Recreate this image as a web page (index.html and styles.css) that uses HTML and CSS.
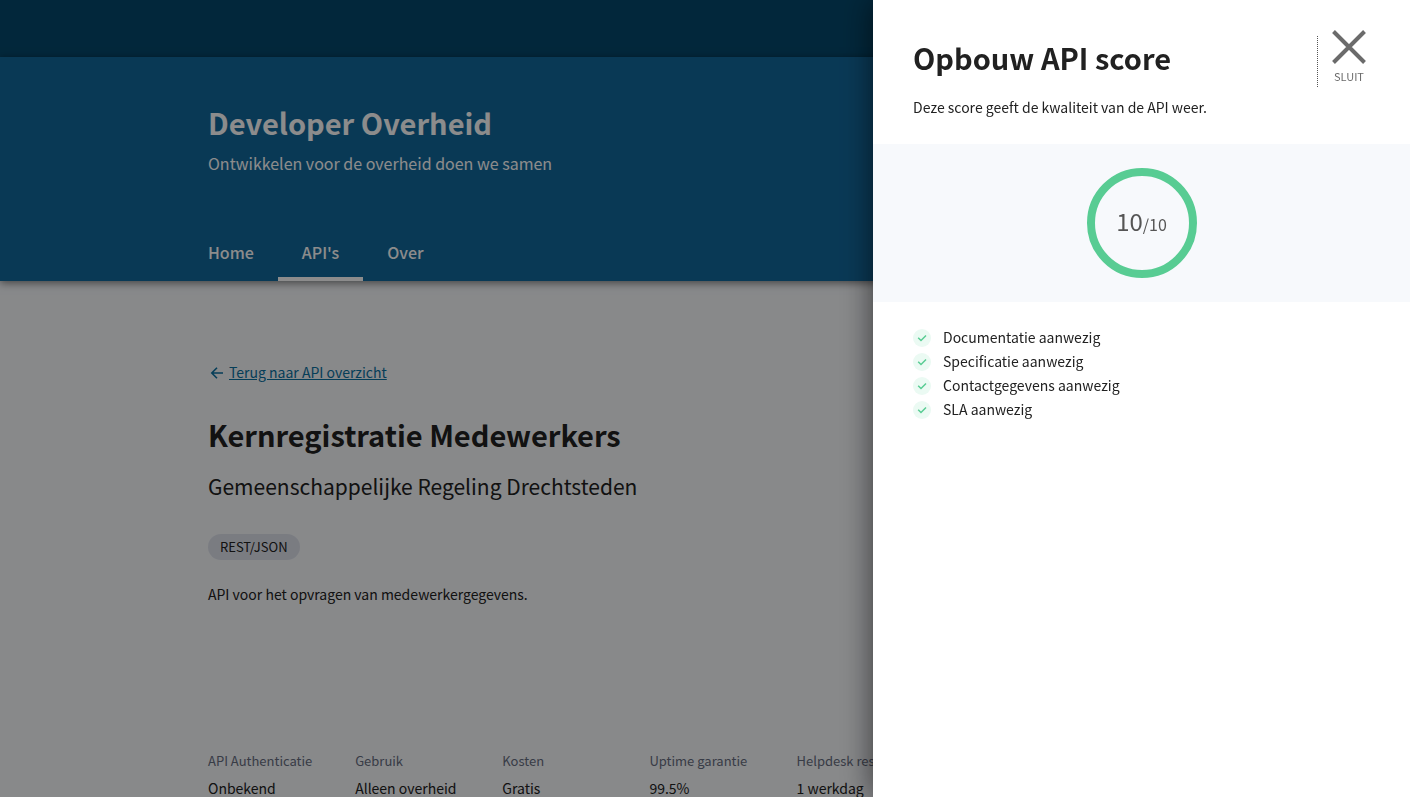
FILE: index.html
```html
<!DOCTYPE html>
<html lang="nl">
<head>
<meta charset="utf-8">
<meta name="viewport" content="width=device-width, initial-scale=1">
<title>Developer Overheid</title>
<link rel="stylesheet" href="styles.css">
</head>
<body>
<div class="page">
  <div class="topbar"></div>
  <header class="header">
    <div class="container">
      <p class="site-title">Developer Overheid</p>
      <p class="site-tagline">Ontwikkelen voor de overheid doen we samen</p>
      <nav class="nav">
        <a class="nav-link" href="#home">Home</a>
        <a class="nav-link nav-link-active" href="#apis">API's</a>
        <a class="nav-link" href="#over">Over</a>
      </nav>
    </div>
  </header>
  <main class="container main">
    <a class="back" href="#apis">
      <svg class="back-icon" viewBox="0 0 18 18" aria-hidden="true"><path d="M15 10H4M9 4.8L3.8 10L9 15.2" fill="none" stroke="currentColor" stroke-width="1.6"/></svg>
      <span class="back-text">Terug naar API overzicht</span>
    </a>
    <h1 class="title">Kernregistratie Medewerkers</h1>
    <p class="organization">Gemeenschappelijke Regeling Drechtsteden</p>
    <span class="tag">REST/JSON</span>
    <p class="description">API voor het opvragen van medewerkergegevens.</p>
    <dl class="facts">
      <div><dt>API Authenticatie</dt><dd>Onbekend</dd></div>
      <div><dt>Gebruik</dt><dd>Alleen overheid</dd></div>
      <div><dt>Kosten</dt><dd>Gratis</dd></div>
      <div><dt>Uptime garantie</dt><dd>99.5%</dd></div>
      <div><dt>Helpdesk respons</dt><dd>1 werkdag</dd></div>
    </dl>
  </main>
</div>
<div class="overlay"></div>
<aside class="drawer" role="dialog" aria-labelledby="drawer-title">
  <div class="drawer-header">
    <div>
      <h2 class="drawer-title" id="drawer-title">Opbouw API score</h2>
      <p class="drawer-intro">Deze score geeft de kwaliteit van de API weer.</p>
    </div>
    <button class="close" type="button">
      <svg class="close-icon" viewBox="0 0 34 34" aria-hidden="true"><path d="M1.5 1.5L32.5 32.5M32.5 1.5L1.5 32.5" stroke="currentColor" stroke-width="4"/></svg>
      <span>SLUIT</span>
    </button>
  </div>
  <div class="score-band">
    <div class="score"><span class="score-value">10</span><span class="score-max">/10</span></div>
  </div>
  <ul class="checks">
    <li><svg class="check" viewBox="0 0 18 18" aria-hidden="true"><circle cx="9" cy="9" r="9" fill="#ebfaf3"/><path d="M5.2 8.8L8 11.5L13 6.5" fill="none" stroke="#58cc93" stroke-width="1.5"/></svg>Documentatie aanwezig</li>
    <li><svg class="check" viewBox="0 0 18 18" aria-hidden="true"><circle cx="9" cy="9" r="9" fill="#ebfaf3"/><path d="M5.2 8.8L8 11.5L13 6.5" fill="none" stroke="#58cc93" stroke-width="1.5"/></svg>Specificatie aanwezig</li>
    <li><svg class="check" viewBox="0 0 18 18" aria-hidden="true"><circle cx="9" cy="9" r="9" fill="#ebfaf3"/><path d="M5.2 8.8L8 11.5L13 6.5" fill="none" stroke="#58cc93" stroke-width="1.5"/></svg>Contactgegevens aanwezig</li>
    <li><svg class="check" viewBox="0 0 18 18" aria-hidden="true"><circle cx="9" cy="9" r="9" fill="#ebfaf3"/><path d="M5.2 8.8L8 11.5L13 6.5" fill="none" stroke="#58cc93" stroke-width="1.5"/></svg>SLA aanwezig</li>
  </ul>
</aside>
</body>
</html>
```
FILE: styles.css
```css
* { box-sizing: border-box; }

body {
  margin: 0;
  font-family: "Source Sans Pro", "Noto Sans CJK SC", "Noto Sans", sans-serif;
  font-size: 14px;
  line-height: 24px;
  color: #212121;
  background: #f7f9fc;
}

h1, h2, p, ul, dl, dd { margin: 0; padding: 0; }

.page {
  height: 100vh;
  overflow: hidden;
  padding-right: 13px;
}

.topbar {
  height: 57px;
  margin-right: -13px;
  background: #05486c;
}

.header {
  margin-right: -13px;
  padding-right: 13px;
  background: #12689c;
  color: #fff;
  box-shadow: 0 2px 8px rgba(0, 0, 0, 0.5);
}

.container {
  max-width: 994px;
  margin: 0 auto;
}

.site-title {
  padding-top: 45px;
  font-size: 29px;
  font-weight: 700;
  line-height: 40px;
}

.site-tagline {
  padding-top: 7px;
  font-size: 16px;
  line-height: 28px;
}

.nav {
  display: flex;
  margin: 48px 0 0 -24px;
}

.nav-link {
  padding: 15px 24px 13px;
  border-bottom: 4px solid transparent;
  font-size: 16px;
  font-weight: 500;
  line-height: 24px;
  color: inherit;
  text-decoration: none;
}

.nav-link-active { border-bottom-color: #fff; }

.main { padding-top: 79px; }

.back {
  display: flex;
  align-items: center;
  width: max-content;
  gap: 3px;
  color: #0b71a1;
  text-decoration: none;
}

.back-icon { width: 18px; height: 18px; }

.back-text { text-decoration: underline; }

.title {
  margin-top: 30px;
  font-size: 29px;
  line-height: 40px;
}

.organization {
  margin-top: 16px;
  font-size: 21px;
  line-height: 32px;
}

.tag {
  display: block;
  width: max-content;
  margin-top: 32px;
  padding: 0 12px;
  border-radius: 13px;
  background: #dfe2ec;
  font-size: 13px;
  line-height: 26px;
}

.description { margin-top: 22px; }

.facts {
  display: grid;
  grid-template-columns: repeat(7, 1fr);
  gap: 36px;
  margin-top: 143px;
  white-space: nowrap;
}

.facts dt {
  font-size: 13px;
  color: #676d80;
}

.facts dd { padding-top: 3px; }

.overlay {
  position: fixed;
  inset: 0;
  background: rgba(0, 0, 0, 0.45);
}

.drawer {
  position: fixed;
  top: 0;
  right: 0;
  bottom: 0;
  width: 550px;
  max-width: 100%;
  padding-right: 13px;
  background: #fff;
  box-shadow: 0 0 30px rgba(0, 0, 0, 0.6);
}

.drawer-header {
  display: flex;
  justify-content: space-between;
  padding: 30px 40px 25px;
}

.drawer-title {
  padding-top: 7px;
  font-size: 29px;
  line-height: 40px;
}

.drawer-intro { padding-top: 18px; }

.close {
  display: flex;
  flex-direction: column;
  align-items: center;
  align-self: flex-start;
  position: relative;
  padding: 0 4px 0 15px;
  border: 0;
  background: none;
  font: inherit;
  font-size: 11px;
  line-height: 24px;
  color: #6b6b6b;
}

.close::before {
  content: "";
  position: absolute;
  left: 0;
  top: 6px;
  bottom: 1px;
  border-left: 1px dotted #555;
}

.close-icon { width: 34px; height: 34px; }

.score-band {
  display: flex;
  justify-content: center;
  padding: 24px;
  background: #f7f9fc;
}

.score {
  display: flex;
  align-items: baseline;
  justify-content: center;
  width: 110px;
  height: 110px;
  border: 8px solid #58cc93;
  border-radius: 50%;
  line-height: 90px;
  color: #555;
}

.score-value { font-size: 24px; }

.score-max { font-size: 16px; }

.checks {
  padding: 23px 40px;
  list-style: none;
}

.checks li {
  display: flex;
  align-items: flex-end;
  gap: 12px;
}

.check { width: 18px; height: 18px; margin-bottom: 2px; }
```
